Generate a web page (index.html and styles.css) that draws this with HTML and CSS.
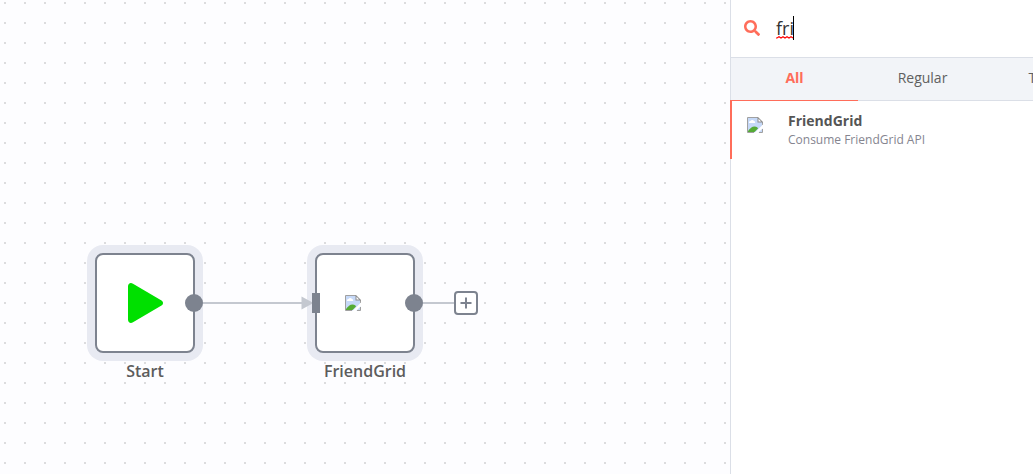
FILE: index.html
```html
<!DOCTYPE html>
<html lang="en">
<head>
<meta charset="utf-8">
<title>Workflow editor</title>
<link rel="stylesheet" href="styles.css">
</head>
<body>
<svg class="defs" width="0" height="0">
  <symbol id="missing-image" viewBox="0 0 16 16">
    <path d="M.5.5h10l5 5v10H.5z" fill="#c6d9f8"/>
    <path d="M2 6a1.500 1.500 0 0 1 1.500-2 2 2 0 0 1 3.500 0A1.300 1.300 0 0 1 8 6z" fill="#fff"/>
    <path d="M1 15v-1C3 11.500 5 9.500 7.500 9.500s3 1 3.500 2L7.500 15z" fill="#55ab35"/>
    <path d="M11 .5H.5v15H7M15.500 5v3M12 15.500h3.500V12" fill="none" stroke="#a0a0a0"/>
    <path d="M11 0 16 5v.5h-5.500V0z" fill="#8c8c8c"/>
    <path d="M11.500 1.800v2.700h2.700z" fill="#fff"/>
    <path d="M7.500 16 16 7.500V11l-5 5z" fill="#fff"/>
  </symbol>
</svg>
<div class="editor">
  <main class="canvas">
    <svg class="wires" width="730" height="474">
      <path d="M203 303H303M422 303H454" stroke="#c4c8d0" stroke-width="2"/>
    </svg>
    <div class="node node-start">
      <svg width="36" height="40" viewBox="0 0 36 40"><path d="M0 3.500C0 .5 2.500-.8 5 .7L33.500 17.400c2 1.200 2 4 0 5.200L5 39.300C2.500 40.800 0 39.500 0 36.500z" fill="#00e000"/></svg>
    </div>
    <div class="node node-friendgrid">
      <svg class="node-image" width="16" height="16"><use href="#missing-image"/></svg>
    </div>
    <svg class="wires" width="730" height="474">
      <path d="M301.500 296.500v13l12-6.500z" fill="#c4c8d0"/>
      <path d="M312 293h8v20h-8z" fill="#7d838f"/>
      <circle cx="194" cy="303" r="9" fill="#7d838f"/>
      <circle cx="414" cy="303" r="9" fill="#7d838f"/>
      <rect x="455" y="292" width="22" height="22" rx="3" fill="#fff" stroke="#7d838f" stroke-width="2"/>
      <path d="M460.500 303h11M466 297.500v11" stroke="#7d838f" stroke-width="2"/>
    </svg>
    <div class="node-name name-start">Start</div>
    <div class="node-name name-friendgrid">FriendGrid</div>
  </main>
  <aside class="panel">
    <div class="search">
      <svg width="16" height="16" viewBox="0 0 512 512"><path fill="#ff6d5a" d="M505 442.700 405.300 343c-4.500-4.500-10.600-7-17-7H372c27.600-35.300 44-79.700 44-128C416 93.100 322.900 0 208 0S0 93.100 0 208s93.100 208 208 208c48.300 0 92.700-16.400 128-44v16.300c0 6.400 2.500 12.500 7 17l99.700 99.700c9.400 9.400 24.600 9.400 33.900 0l28.300-28.300c9.400-9.400 9.400-24.600.1-34zM208 336c-70.700 0-128-57.200-128-128 0-70.700 57.200-128 128-128 70.700 0 128 57.200 128 128 0 70.700-57.200 128-128 128z"/></svg>
      <div class="query"><span class="misspelled">fri</span><span class="caret"></span>
        <svg class="squiggle" width="17" height="3"><path d="M0 2 1 2 3 .8 5 2 7 .8 9 2 11 .8 13 2 15 .8 17 2" fill="none" stroke="#f00" stroke-width="1.200"/></svg>
      </div>
    </div>
    <nav class="tabs">
      <div class="tab active">All</div>
      <div class="tab">Regular</div>
      <div class="tab">Trigger</div>
    </nav>
    <div class="result">
      <svg class="result-icon" width="16" height="16"><use href="#missing-image"/></svg>
      <div class="result-text">
        <div class="result-title">FriendGrid</div>
        <div class="result-description">Consume FriendGrid API</div>
      </div>
    </div>
  </aside>
</div>
</body>
</html>
```
FILE: styles.css
```css
* { box-sizing: border-box; }
body {
  margin: 0;
  overflow: hidden;
  font-family: "Open Sans", sans-serif;
  color: #555;
}
svg { display: block; flex: none; }
.defs { position: absolute; }
.editor { display: flex; width: 1033px; height: 474px; overflow: hidden; }
.canvas {
  position: relative;
  width: 730px;
  flex: none;
  background-color: #fdfdff;
  background-image:
    linear-gradient(90deg, transparent 2px, #fdfdff 2px),
    linear-gradient(#dcdcde 2px, #fdfdff 2px);
  background-size: 20px 20px;
  background-position: 4px 2px;
}
.wires { position: absolute; left: 0; top: 0; }
.node {
  position: absolute;
  top: 253px;
  display: flex;
  align-items: center;
  width: 100px;
  height: 100px;
  border: 2px solid #7d838f;
  border-radius: 8px;
  background: #fff;
  box-shadow: 0 0 0 8px #e8eaf2;
}
.node-start { left: 95px; padding-left: 31px; }
.node-friendgrid { left: 315px; padding-left: 28px; }
.node-name {
  position: absolute;
  top: 360px;
  width: 140px;
  text-align: center;
  font-size: 16px;
  font-weight: 600;
  line-height: 22px;
  color: #5c5c5c;
}
.name-start { left: 75px; }
.name-friendgrid { left: 295px; }
.panel {
  width: 400px;
  flex: none;
  background: linear-gradient(#dbdfe7, #dbdfe7) 0 0 / 1px 100% no-repeat #fff;
}
.search {
  display: flex;
  align-items: center;
  height: 58px;
  margin-left: 1px;
  padding: 0 13px 1px;
  gap: 16px;
  border-bottom: 1px solid #dbdfe7;
}
.query {
  position: relative;
  display: flex;
  align-items: center;
  font-size: 18px;
  line-height: 24px;
  color: #333;
}
.caret { width: 1px; height: 24px; margin-left: -1px; background: #000; }
.squiggle { position: absolute; left: 0; top: 20px; }
.tabs {
  display: flex;
  height: 43px;
  margin-left: 1px;
  background: #f2f4f8;
  border-bottom: 1px solid #dbdfe7;
}
.tab {
  width: 129px;
  height: 43px;
  flex: none;
  padding-top: 10px;
  text-align: center;
  font-size: 14px;
  line-height: 20px;
  color: #606060;
}
.tab.active {
  width: 127px;
  color: #ff6d5a;
  font-weight: 700;
  border-bottom: 1px solid #ff6d5a;
}
.result {
  display: flex;
  height: 59px;
  margin-top: -1px;
  padding: 12px 0 0 15px;
  gap: 25px;
  border-left: 2px solid #ff6d5a;
}
.result-icon { margin-top: 5px; }
.result-title { font-size: 14px; font-weight: 700; line-height: 18px; }
.result-description { font-size: 12px; line-height: 18px; color: #85858f; margin-top: 1px; }
```
